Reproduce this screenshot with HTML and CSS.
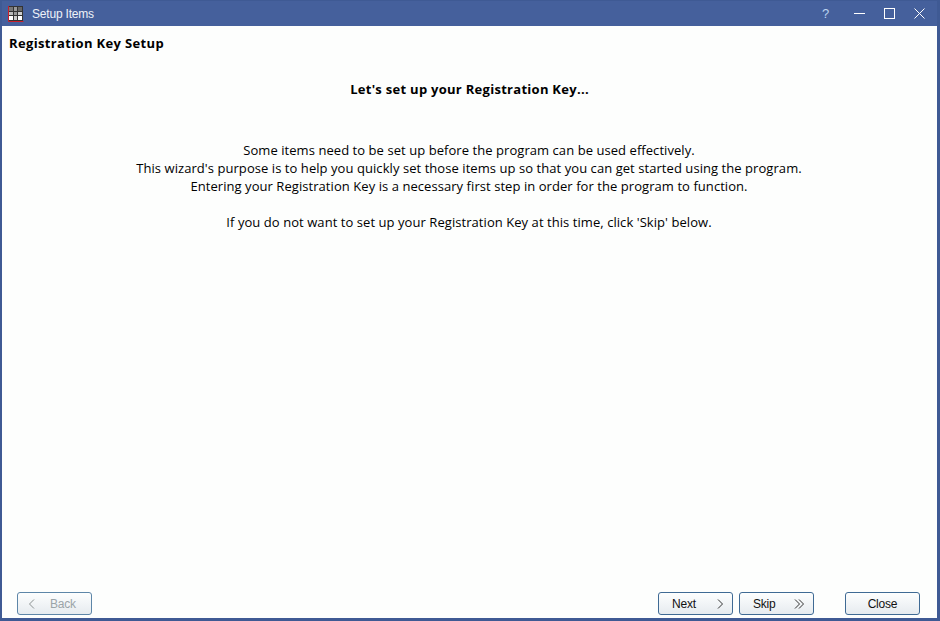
FILE: index.html
```html
<!DOCTYPE html>
<html lang="en">
<head>
<meta charset="utf-8">
<title>Setup Items</title>
<link rel="stylesheet" href="styles.css">
</head>
<body>
<div class="window">
  <header class="titlebar">
    <svg class="app-icon" width="16" height="16" viewBox="0 0 16 16">
      <rect x="0" y="0" width="15" height="15" fill="#333"/>
      <rect x="1" y="1" width="4" height="4" fill="#777"/>
      <rect x="6" y="1" width="3" height="4" fill="#999"/>
      <rect x="10" y="1" width="4" height="4" fill="#666"/>
      <rect x="1" y="6" width="4" height="3" fill="#bbb"/>
      <rect x="6" y="6" width="3" height="3" fill="#999"/>
      <rect x="10" y="6" width="4" height="3" fill="#ccc"/>
      <rect x="1" y="10" width="4" height="4" fill="#fff"/>
      <rect x="6" y="10" width="3" height="4" fill="#ccc"/>
      <rect x="10" y="10" width="4" height="4" fill="#fff"/>
      <path d="M.5 0V15.5H15.5" fill="none" stroke="#c8202c"/>
    </svg>
    <span class="title">Setup Items</span>
    <div class="controls">
      <span class="help">?</span>
      <svg class="ctl ctl-min" width="11" height="11" viewBox="0 0 11 11"><path d="M0 5.5H11" stroke="#fff" fill="none"/></svg>
      <svg class="ctl ctl-max" width="11" height="11" viewBox="0 0 11 11"><rect x=".5" y=".5" width="10" height="10" stroke="#fff" fill="none"/></svg>
      <svg class="ctl ctl-close" width="11" height="11" viewBox="0 0 11 11"><path d="M.5 .5L10.5 10.5M10.5 .5L.5 10.5" stroke="#fff" fill="none"/></svg>
    </div>
  </header>
  <main class="content">
    <h1 class="page-title">Registration Key Setup</h1>
    <h2 class="heading">Let's set up your Registration Key...</h2>
    <div class="message">
      <p>Some items need to be set up before the program can be used effectively.</p>
      <p>This wizard's purpose is to help you quickly set those items up so that you can get started using the program.</p>
      <p>Entering your Registration Key is a necessary first step in order for the program to function.</p>
      <p class="spaced">If you do not want to set up your Registration Key at this time, click 'Skip' below.</p>
    </div>
    <footer class="actions">
      <button class="btn btn-back" disabled>
        <svg width="8" height="10" viewBox="0 0 8 10"><path d="M6 .5L1.5 5L6 9.5" fill="none" stroke="#8a9090"/></svg>
        <span>Back</span>
      </button>
      <div class="nav">
        <button class="btn btn-next">
          <span>Next</span>
          <svg width="8" height="10" viewBox="0 0 8 10"><path d="M2 .5L6.5 5L2 9.5" fill="none" stroke="#333"/></svg>
        </button>
        <button class="btn btn-skip">
          <span>Skip</span>
          <svg width="11" height="10" viewBox="0 0 11 10"><path d="M1 .5L5.5 5L1 9.5M5 .5L9.5 5L5 9.5" fill="none" stroke="#333"/></svg>
        </button>
      </div>
      <button class="btn btn-close">Close</button>
    </footer>
  </main>
</div>
</body>
</html>
```
FILE: styles.css
```css
* { box-sizing: border-box; }
html, body { margin: 0; height: 100%; }
body { width: 940px; height: 621px; overflow: hidden; }
.window {
  width: 940px; height: 621px;
  display: flex; flex-direction: column;
  background: #fdfefd;
  border: 2px solid #3f5a94;
  border-width: 1px 3px 3px 2px;
}
.titlebar {
  height: 25px; flex: none;
  background: #45609c;
  display: flex; align-items: center;
  padding-left: 6px;
  color: #fff;
  font: 12px/1 "Liberation Sans", sans-serif;
}
.app-icon { flex: none; }
.title { margin-left: 8px; color: #eef2f8; font-size: 12px; letter-spacing: -.2px; }
.controls { margin-left: auto; display: flex; align-items: center; }
.help { color: #bcd4f0; font-size: 13px; width: 11px; text-align: center; margin-right: 23px; }
.ctl { flex: none; display: block; }
.ctl-min { margin-right: 19px; }
.ctl-max { margin-right: 19px; }
.ctl-close { margin-right: 12px; }
.content {
  flex: 1; min-height: 0;
  display: flex; flex-direction: column;
  color: #000;
  font-family: "Open Sans", "Noto Sans", sans-serif;
}
.page-title { margin: 9px 0 0 7px; font-size: 13px; line-height: 16px; font-weight: 700; letter-spacing: .35px; }
.heading { margin: 30px 0 0; font-size: 13px; line-height: 16px; font-weight: 700; text-align: center; letter-spacing: .28px; }
.message { margin-top: 44px; padding-right: 1px; text-align: center; font-size: 13px; line-height: 18px; letter-spacing: .06px; }
.message p { margin: 0; }
.message .spaced { margin-top: 18px; }
.actions { margin-top: auto; padding: 0 17px 3px 15px; display: flex; align-items: center; }
.nav { margin-left: auto; display: flex; gap: 6px; margin-right: 31px; }
.btn {
  width: 75px; height: 23px; padding: 0;
  border: 1px solid #3f6a94; border-radius: 3px;
  background: linear-gradient(#fdfefe, #e6ebef);
  font: 12px/1 "Liberation Sans", sans-serif;
  letter-spacing: -.2px;
  color: #111;
  display: flex; align-items: center;
}
.btn-back { color: #9aa4a8; border-color: #5d86a8; padding-left: 10px; gap: 14px; }
.btn-next { justify-content: space-between; padding: 0 8px 0 13px; }
.btn-skip { justify-content: space-between; padding: 0 8px 0 13px; }
.btn-close { justify-content: center; }
```
